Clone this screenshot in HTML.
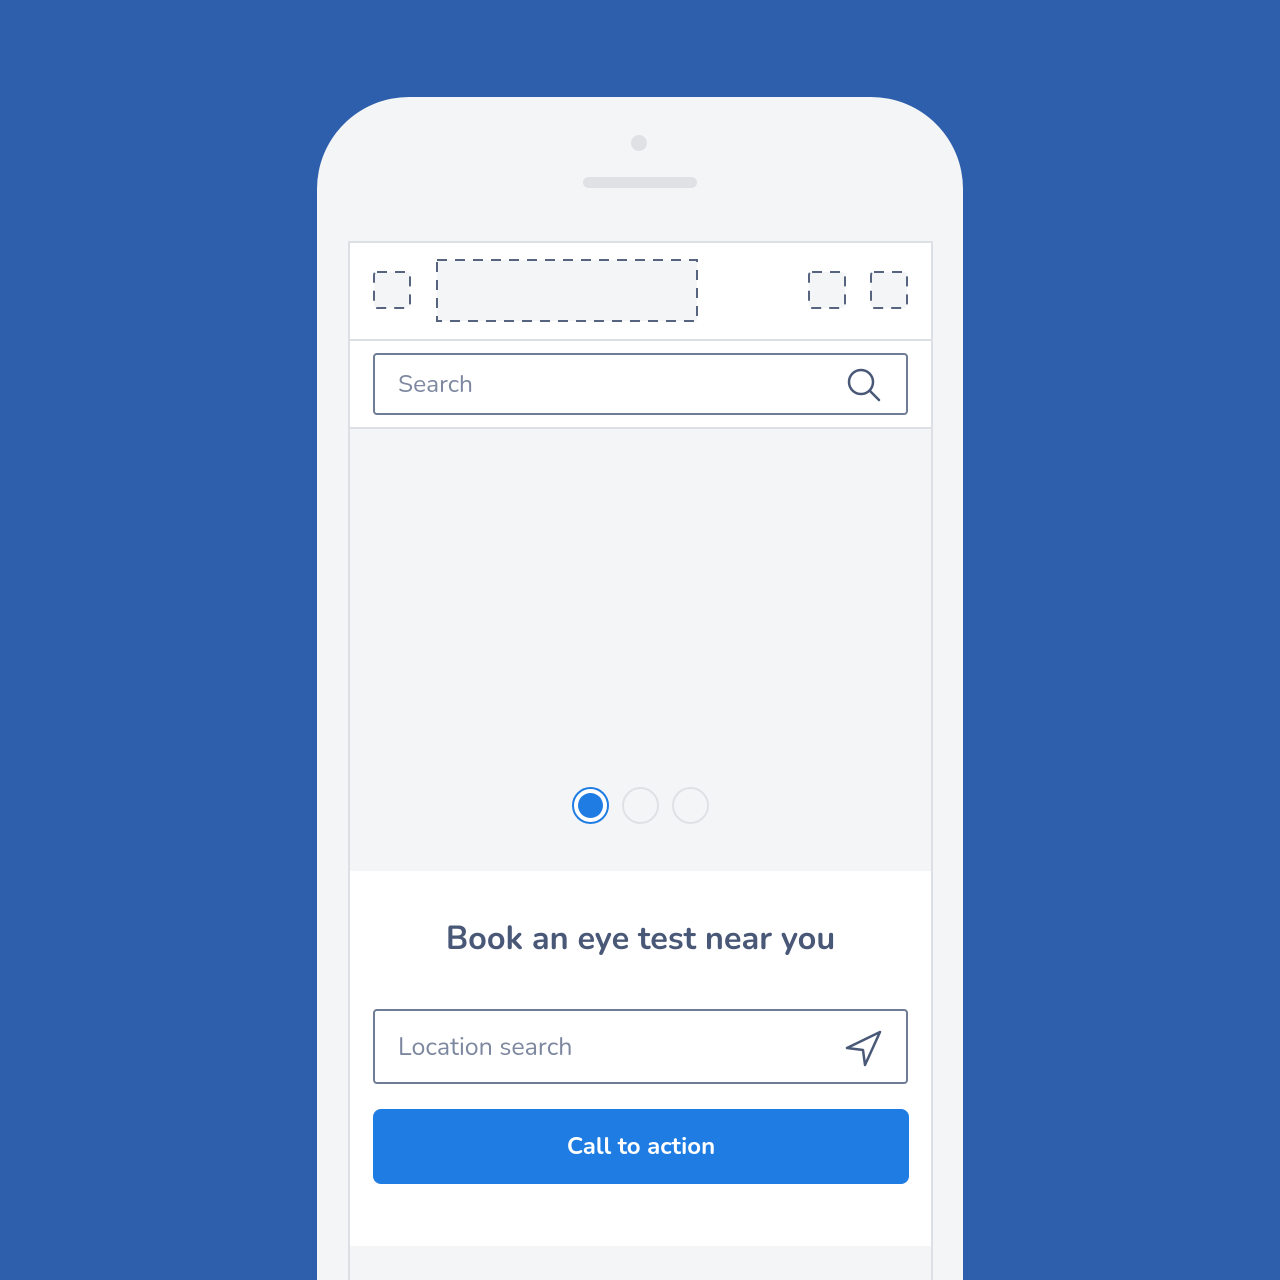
<!DOCTYPE html>
<html><head><style>
*{margin:0;padding:0;box-sizing:border-box}
html,body{width:1280px;height:1280px;overflow:hidden}
body{background:#2e5fac;position:relative;font-family:"Nunito","Liberation Sans",sans-serif}
.phone{position:absolute;left:317px;top:97px;width:646px;height:1183px;background:#f4f5f7;border-radius:92px 92px 0 0}
.cam{position:absolute;left:631px;top:135px;width:16px;height:16px;border-radius:50%;background:#dfe1e5}
.spk{position:absolute;left:583px;top:177px;width:114px;height:11px;border-radius:6px;background:#dfe1e5}
.screen{position:absolute;left:348px;top:241px;width:585px;height:1045px;border:2px solid #dcdfe3;background:#f4f5f7}
.hdr{position:absolute;left:0;top:0;width:581px;height:98px;background:#fff;border-bottom:2px solid #dcdfe3}
.sarea{position:absolute;left:0;top:98px;width:581px;height:88px;background:#fff;border-bottom:2px solid #dcdfe3}
.inp{position:absolute;border:2px solid #6f7c95;border-radius:4px;background:#fff;color:#7d88a0;font-size:25px;padding-left:23px;display:flex;align-items:center}
.dot{position:absolute;top:787px;width:37px;height:37px;border-radius:50%;border:2px solid #dfe1e5}
.white{position:absolute;left:0;top:628px;width:581px;height:375px;background:#fff}
h1{position:absolute;left:0;width:581px;top:46px;text-align:center;font-size:32.5px;color:#4a5878;font-weight:bold}
.btn{position:absolute;left:23px;top:866px;width:536px;height:75px;background:#1f7ce2;border-radius:8px;color:#fff;font-size:24px;font-weight:bold;display:flex;align-items:center;justify-content:center}
</style></head><body>
<div class="phone"></div>
<div class="cam"></div><div class="spk"></div>
<div class="screen">
<div class="hdr">
<svg width="581" height="96" style="position:absolute;left:0;top:0" fill="#f4f5f7" stroke="#56647f" stroke-width="2" stroke-dasharray="10 8">
<rect x="24" y="29" width="36" height="36" rx="3"/>
<rect x="87" y="17" width="260" height="61"/>
<rect x="459" y="29" width="36" height="36" rx="3"/>
<rect x="521" y="29" width="36" height="36" rx="3"/>
</svg>
</div>
<div class="sarea">
<div class="inp" style="left:23px;top:12px;width:535px;height:62px;font-size:24.5px">Search
<svg style="position:absolute;right:24px;top:12px" width="36" height="36" viewBox="0 0 36 36" fill="none" stroke="#4a5878" stroke-width="2.5" stroke-linecap="round"><circle cx="15" cy="15" r="12"/><line x1="24" y1="24" x2="33" y2="33"/></svg>
</div></div>
<div class="white">
<h1>Book an eye test near you</h1>
</div>
<div class="inp" style="left:23px;top:766px;width:535px;height:75px">Location search
<svg style="position:absolute;right:22px;top:17px" width="40" height="40" viewBox="0 0 40 40" fill="none" stroke="#4a5878" stroke-width="2.5" stroke-linejoin="round"><path d="M36 4 L3 20 L19 22 L21 37 Z"/></svg>
</div>
<div class="btn">Call to action</div>
</div>
<div class="dot" style="left:572px;border-color:#1f7ce2;background:#fff"><div style="position:absolute;left:4px;top:4px;width:25px;height:25px;border-radius:50%;background:#1f7ce2"></div></div>
<div class="dot" style="left:622px"></div>
<div class="dot" style="left:672px"></div>
</body></html>
